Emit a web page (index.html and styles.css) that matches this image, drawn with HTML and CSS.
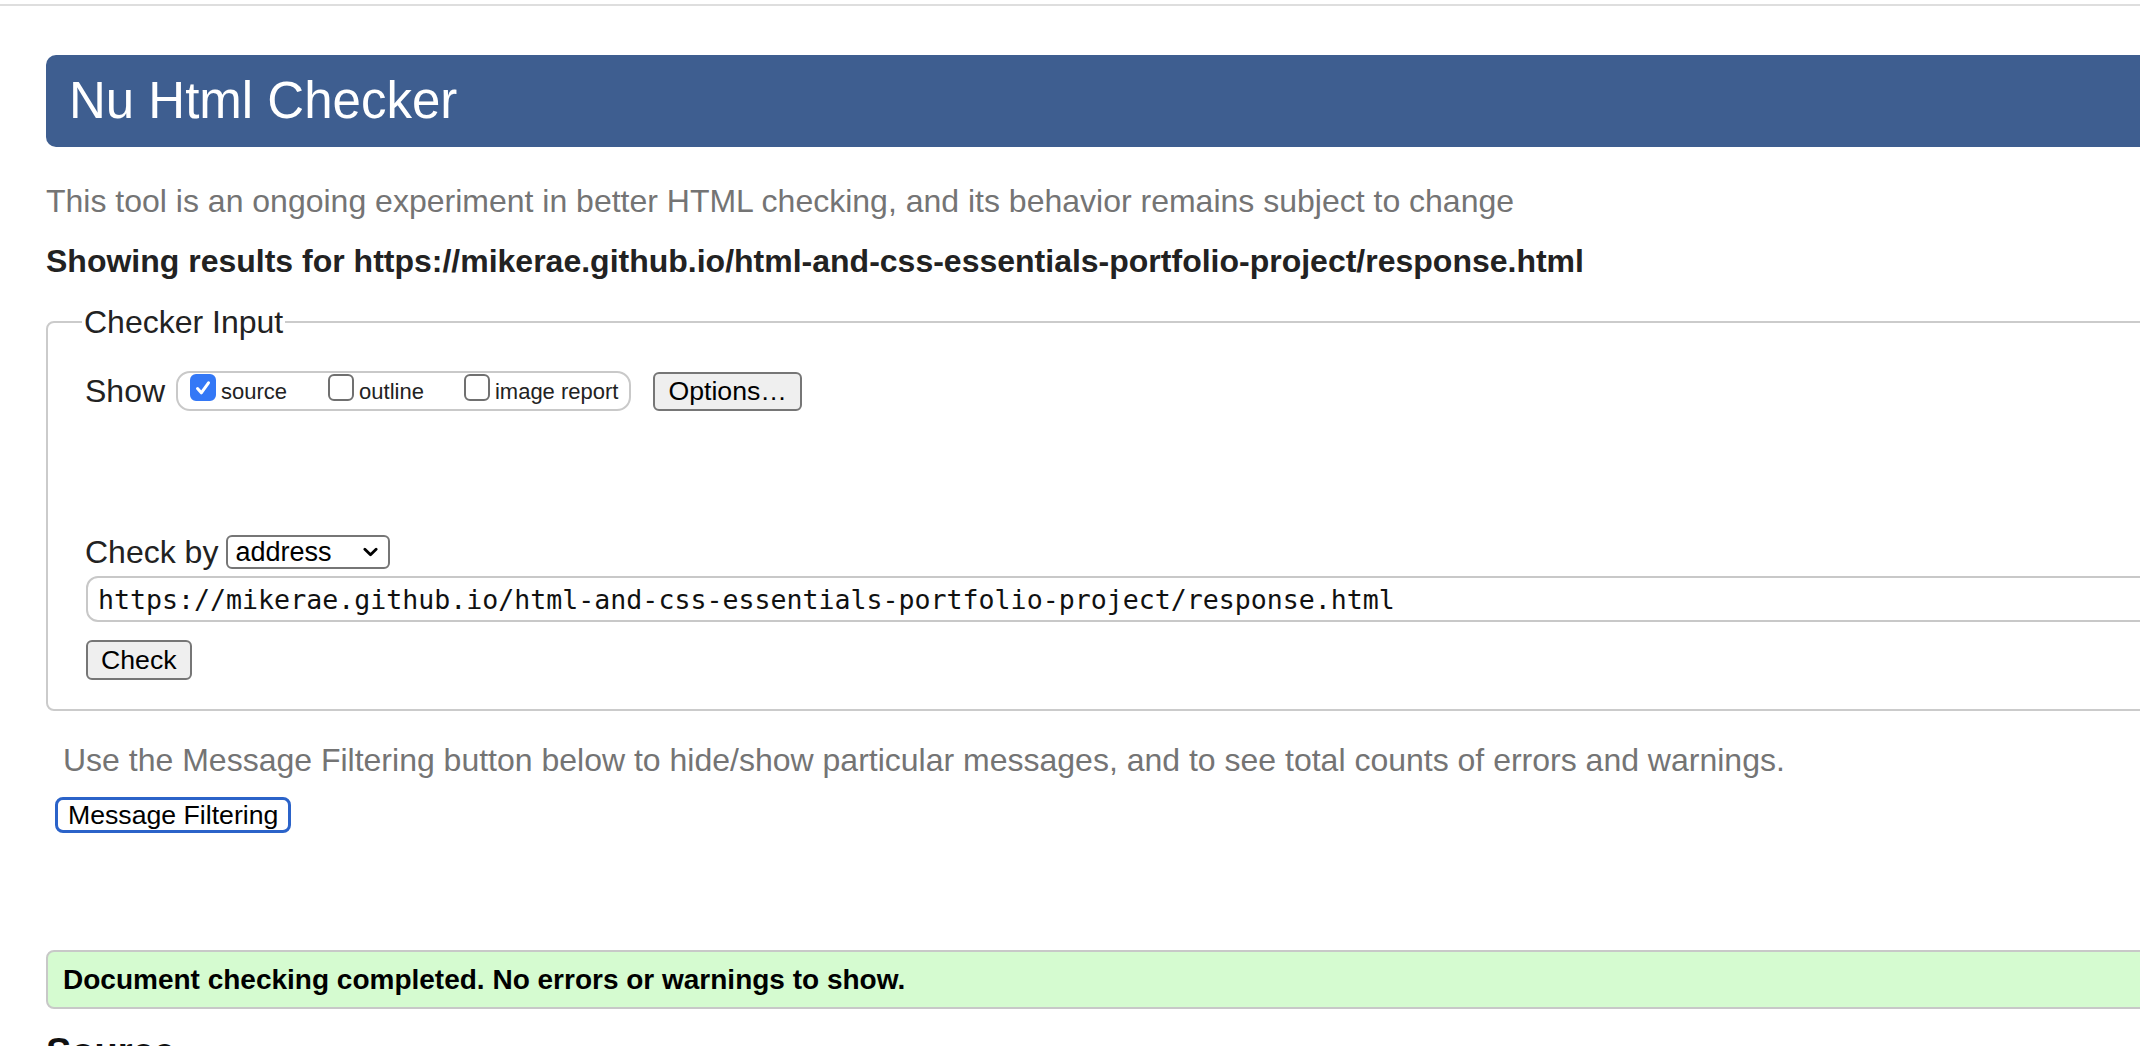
FILE: index.html
```html
<!DOCTYPE html>
<html lang="en">
<head>
<meta charset="utf-8">
<title>Nu Html Checker</title>
<link rel="stylesheet" href="styles.css">
</head>
<body>
<div class="topline"></div>
<main class="page">
  <h1 class="title">Nu Html Checker</h1>
  <p class="intro">This tool is an ongoing experiment in better HTML checking, and its behavior remains subject to change</p>
  <p class="showing">Showing results for https://mikerae.github.io/html-and-css-essentials-portfolio-project/response.html</p>
  <form class="form">
    <fieldset class="checker">
      <legend class="legend">Checker Input</legend>
      <div class="show-row">
        <span class="label">Show</span>
        <span class="group">
          <label class="opt"><input class="cb" type="checkbox" checked><span>source</span></label>
          <label class="opt gap"><input class="cb" type="checkbox"><span>outline</span></label>
          <label class="opt gap2"><input class="cb" type="checkbox"><span>image report</span></label>
        </span>
        <button type="button" class="btn options">Options…</button>
      </div>
      <div class="checkby-row">
        <span class="label">Check by</span>
        <select class="select"><option>address</option></select>
      </div>
      <input class="url" type="text" value="https://mikerae.github.io/html-and-css-essentials-portfolio-project/response.html">
      <button type="button" class="btn check">Check</button>
    </fieldset>
  </form>
  <p class="filter-note">Use the Message Filtering button below to hide/show particular messages, and to see total counts of errors and warnings.</p>
  <button type="button" class="filter-btn">Message Filtering</button>
  <div class="success"><p class="success-text">Document checking completed. No errors or warnings to show.</p></div>
  <h2 class="source">Source</h2>
</main>
</body>
</html>
```
FILE: styles.css
```css
html, body {
  margin: 0;
  padding: 0;
  overflow: hidden;
  background: #fff;
}
body {
  font-family: "Liberation Sans", Arial, Helvetica, sans-serif;
  color: #222;
}
.topline {
  height: 2px;
  margin-top: 4px;
  background: #dedede;
}
.page {
  width: 2400px;
  padding-left: 46px;
  box-sizing: border-box;
}
.title {
  margin: 49px 0 0;
  height: 92px;
  line-height: 92px;
  padding: 0 23px;
  font-size: 51px;
  font-weight: normal;
  color: #fff;
  background: #3e5e90;
  border-radius: 10px;
}
.intro {
  margin: 34px 0 0;
  font-size: 32px;
  line-height: 40px;
  color: #747474;
}
.showing {
  margin: 20px 0 0;
  font-size: 32px;
  line-height: 40px;
  font-weight: bold;
  color: #222;
}
.form {
  margin: 0;
}
.checker {
  margin: 21px 0 0;
  padding: 29px 0 29px 37px;
  border: 2px solid #cbcbcb;
  border-radius: 8px;
  min-width: 0;
}
.legend {
  font-size: 32px;
  line-height: 40px;
  padding: 0 2px;
  margin-left: -3px;
  color: #222;
}
.label {
  font-size: 32px;
  line-height: 40px;
  color: #222;
}
.show-row {
  display: flex;
  align-items: center;
  height: 40px;
}
.group {
  display: flex;
  height: 40px;
  box-sizing: border-box;
  margin-left: 11px;
  padding: 0 11px 0 12px;
  border: 2px solid #c9c9c9;
  border-radius: 14px;
}
.opt {
  display: flex;
  height: 36px;
  font-size: 22px;
  line-height: 36px;
  padding-top: 1px;
  box-sizing: border-box;
  color: #222;
}
.gap { margin-left: 41px; }
.gap2 { margin-left: 40px; }
.cb {
  -webkit-appearance: none;
  appearance: none;
  width: 26px;
  height: 27px;
  margin: 0 5px 0 0;
  border: 2px solid #707070;
  border-radius: 6px;
  background: #fff;
  box-sizing: border-box;
  flex: none;
}
.cb:checked {
  border-color: #3478f6;
  background: #3478f6 url("data:image/svg+xml,%3Csvg xmlns='http://www.w3.org/2000/svg' viewBox='0 0 20 20'%3E%3Cpath d='M4.5 10.5l3.8 4.3 7.2-10' fill='none' stroke='white' stroke-width='3' stroke-linecap='round' stroke-linejoin='round'/%3E%3C/svg%3E") center / 20px 20px no-repeat;
}
.btn {
  font-family: "Liberation Sans", Arial, Helvetica, sans-serif;
  font-size: 26.67px;
  color: #000;
  background: #efefef;
  border: 2px solid #767676;
  border-radius: 6px;
  padding: 0 13px;
  box-sizing: border-box;
}
.options {
  margin-left: 22px;
  height: 39px;
}
.checkby-row {
  display: flex;
  align-items: center;
  height: 40px;
  margin-top: 121px;
}
.select {
  -webkit-appearance: none;
  appearance: none;
  margin-left: 8px;
  width: 164px;
  height: 34px;
  box-sizing: border-box;
  padding: 0 0 0 7px;
  font-family: "Liberation Sans", Arial, Helvetica, sans-serif;
  font-size: 27px;
  color: #000;
  border: 2px solid #767676;
  border-radius: 6px;
  background: #fff url("data:image/svg+xml,%3Csvg xmlns='http://www.w3.org/2000/svg' viewBox='0 0 16 10'%3E%3Cpath d='M2 2l6 6 6-6' fill='none' stroke='black' stroke-width='3' stroke-linecap='round' stroke-linejoin='round'/%3E%3C/svg%3E") right 10px center / 15px 10px no-repeat;
}
.url {
  display: block;
  margin: 4px 0 0 1px;
  width: 2300px;
  height: 46px;
  box-sizing: border-box;
  padding: 0 10px;
  border: 2px solid #c8c8c8;
  border-radius: 12px;
  font-family: "DejaVu Sans Mono", "Liberation Mono", monospace;
  font-size: 26.6px;
  color: #111;
  background: #fff;
}
.check {
  display: block;
  margin: 18px 0 0 1px;
  height: 40px;
}
.filter-note {
  margin: 29px 0 0 17px;
  font-size: 32px;
  line-height: 40px;
  color: #747474;
}
.filter-btn {
  display: block;
  margin: 17px 0 0 9px;
  height: 36px;
  padding: 0 10px;
  box-sizing: border-box;
  font-family: "Liberation Sans", Arial, Helvetica, sans-serif;
  font-size: 26.67px;
  color: #000;
  background: #fff;
  border: 3px solid #2b63c9;
  border-radius: 8px;
}
.success {
  margin-top: 117px;
  height: 59px;
  box-sizing: border-box;
  display: flex;
  align-items: center;
  padding-left: 15px;
  border: 2px solid #c8c8c8;
  border-radius: 8px;
  background: #d5fbd0;
}
.success-text {
  margin: 0;
  font-size: 28px;
  font-weight: bold;
  color: #000;
}
.source {
  margin: 21px 0 0;
  font-size: 38px;
  line-height: 44px;
  font-weight: bold;
  color: #111;
}
```
